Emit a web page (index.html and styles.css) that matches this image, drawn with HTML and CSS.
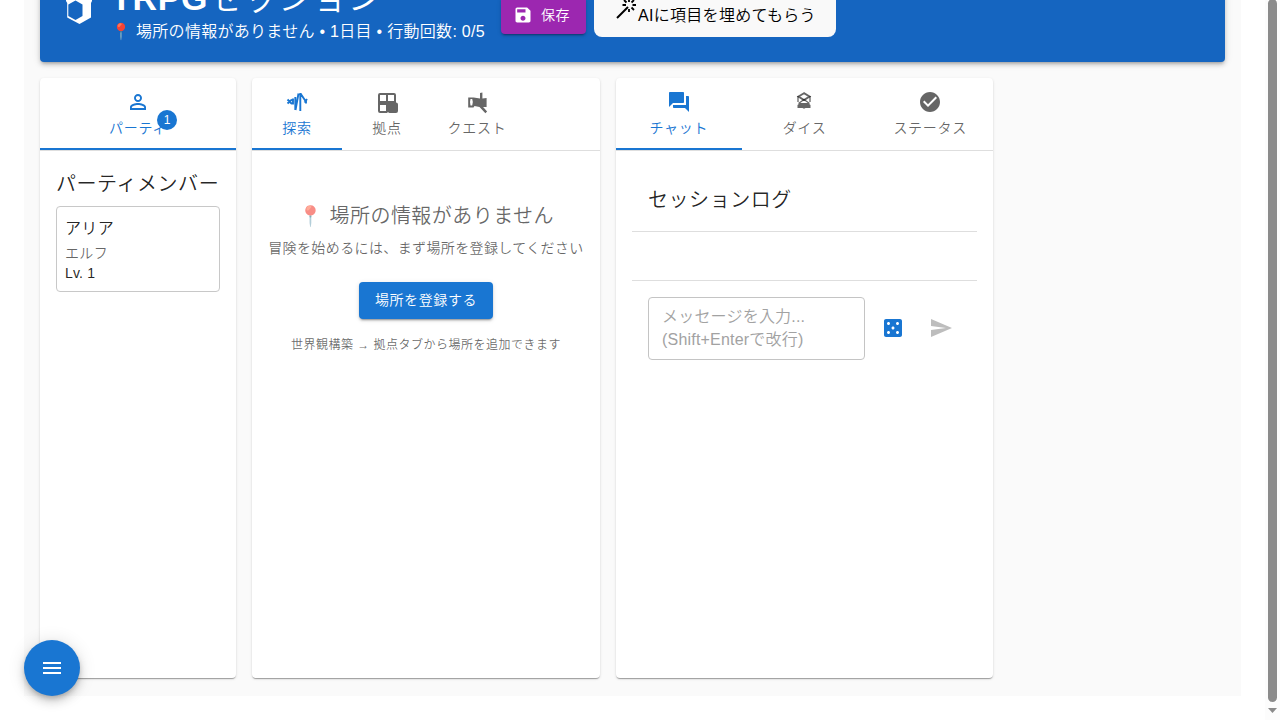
FILE: index.html
```html
<!DOCTYPE html>
<html lang="ja">
<head>
<meta charset="utf-8">
<title>TRPGセッション</title>
<link rel="stylesheet" href="styles.css">
</head>
<body>
<div class="page">
  <main class="session">
    <header class="banner">
      <svg class="logo" viewBox="0 0 35 35"><path fill-rule="evenodd" d="M2 4 15 0l13 4v8l-1 2v14.500L15.500 35 3.200 28.500V14L2 12ZM11.500 11.500 4.300 15.500V27l7.200 4 7-4V15.500Z"/></svg>
      <div class="heading">
        <h1><b>TRPG</b>セッション</h1>
        <p>📍 場所の情報がありません • 1日目 • 行動回数: 0/5</p>
      </div>
      <button class="btn save"><svg viewBox="0 0 24 24"><path d="M17 3H5c-1.110 0-2 .9-2 2v14c0 1.100.89 2 2 2h14c1.100 0 2-.9 2-2V7l-4-4zm-5 16c-1.660 0-3-1.340-3-3s1.340-3 3-3 3 1.340 3 3-1.340 3-3 3zm3-10H5V5h10v4z"/></svg>保存</button>
      <button class="ai"><svg viewBox="0 0 24 24"><path d="M3 21 14 10" stroke="currentColor" stroke-width="2" fill="none"/><path d="M15 1v4M15 12v3M8.500 8H12M18.500 8H22M10 3l2.500 2.500M20 3l-2.500 2.500M17.500 10.500 20 13" stroke="currentColor" stroke-width="1.800" fill="none"/></svg>AIに項目を埋めてもらう</button>
    </header>
    <div class="columns">
      <section class="panel party">
        <nav class="tabs">
          <div class="tab active"><svg viewBox="0 0 24 24"><path d="M12 5.900c1.160 0 2.100.94 2.100 2.100s-.94 2.100-2.100 2.100S9.900 9.160 9.900 8s.94-2.100 2.100-2.100m0 9c2.970 0 6.100 1.460 6.100 2.100v1.100H5.900V17c0-.64 3.130-2.100 6.100-2.100M12 4C9.790 4 8 5.790 8 8s1.790 4 4 4 4-1.790 4-4-1.790-4-4-4zm0 9c-2.670 0-8 1.340-8 4v3h16v-3c0-2.660-5.330-4-8-4z"/></svg><span class="label">パーティ<b class="badge">1</b></span></div>
        </nav>
        <div class="party-body">
          <h2>パーティメンバー</h2>
          <div class="member"><p class="name">アリア</p><p class="race">エルフ</p><p class="level">Lv. 1</p></div>
        </div>
      </section>
      <section class="panel world">
        <nav class="tabs">
          <div class="tab active"><svg viewBox="0 0 24 24"><path d="m2.500 9.500 4.500 4.500M2.500 13.500l4.500-4M8 8.500v6M10.300 7v13M10.500 20 13.500 3.500M15.300 3v18M15.500 3.500l5 7.500M19.500 12.500 22 9M21 9.500v4" fill="none" stroke="currentColor" stroke-width="1.900"/></svg><span class="label">探索</span></div>
          <div class="tab"><svg viewBox="0 0 24 24"><path fill-rule="evenodd" d="M5 3h14a2 2 0 0 1 2 2v7.500a2 2 0 0 1 2 2V21a2 2 0 0 1-2 2h-6a2 2 0 0 1-2-1l-1 1H5a2 2 0 0 1-2-2V5a2 2 0 0 1 2-2ZM5 5v6h6V5ZM13 5v6h6V5ZM5 15v6h6v-6Z"/></svg><span class="label">拠点</span></div>
          <div class="tab"><svg viewBox="0 0 24 24"><path fill-rule="evenodd" d="M3.200 7.500h5.500L15 8.500V3l2.400-.500v6l4.200-.500v9h-3.500l4 4.500-1.700 1.700L14.500 17l-5-1-1 1.500H3.200ZM5.500 9q-1 3 0 6.500h1.700q1.300-3.500 0-6.500Z"/></svg><span class="label">クエスト</span></div>
        </nav>
        <div class="empty">
          <h2>📍 場所の情報がありません</h2>
          <p class="hint">冒険を始めるには、まず場所を登録してください</p>
          <button class="btn register">場所を登録する</button>
          <p class="note">世界観構築 → 拠点タブから場所を追加できます</p>
        </div>
      </section>
      <section class="panel chat">
        <nav class="tabs">
          <div class="tab active"><svg viewBox="0 0 24 24"><path d="M21 6h-2v9H6v2c0 .55.45 1 1 1h11l4 4V7c0-.55-.45-1-1-1zm-4 6V3c0-.55-.45-1-1-1H3c-.55 0-1 .45-1 1v14l4-4h10c.55 0 1-.45 1-1z"/></svg><span class="label">チャット</span></div>
          <div class="tab"><svg class="shift" viewBox="0 0 24 24"><path d="M12 3.200 6.500 6.500 12 10l5.500-3.500Z" fill="none" stroke="currentColor" stroke-width="1.900"/><path d="M6 6v6M18 6v6M12 9.500 6.500 13.500M12 9.500l5.500 4" fill="none" stroke="currentColor" stroke-width="1.300"/><path d="m5.500 15 2.500-2h8l2.500 2v3h-5l-1.500.800-1.500-.800h-5Z"/></svg><span class="label">ダイス</span></div>
          <div class="tab"><svg viewBox="0 0 24 24"><path d="M12 2C6.480 2 2 6.480 2 12s4.480 10 10 10 10-4.480 10-10S17.520 2 12 2zm-2 15-5-5 1.410-1.410L10 14.170l7.590-7.590L19 8l-9 9z"/></svg><span class="label">ステータス</span></div>
        </nav>
        <div class="chat-body">
          <h2>セッションログ</h2>
          <div class="log"></div>
          <div class="composer">
            <textarea placeholder="メッセージを入力... (Shift+Enterで改行)" rows="2"></textarea>
            <button class="icon dice"><svg viewBox="0 0 24 24"><path d="M19 3H5c-1.100 0-2 .9-2 2v14c0 1.100.9 2 2 2h14c1.100 0 2-.9 2-2V5c0-1.100-.9-2-2-2zM7.500 18c-.83 0-1.500-.67-1.500-1.500S6.670 15 7.500 15s1.500.67 1.500 1.500S8.330 18 7.500 18zm0-9C6.670 9 6 8.330 6 7.500S6.670 6 7.500 6 9 6.670 9 7.500 8.330 9 7.500 9zm4.500 4.500c-.83 0-1.500-.67-1.500-1.500s.67-1.500 1.500-1.500 1.500.67 1.500 1.500-.67 1.500-1.500 1.500zm4.500 4.500c-.83 0-1.500-.67-1.500-1.500s.67-1.500 1.500-1.500 1.500.67 1.500 1.500-.67 1.500-1.500 1.500zm0-9c-.83 0-1.500-.67-1.500-1.500S15.670 6 16.500 6s1.500.67 1.500 1.500S17.330 9 16.500 9z"/></svg></button>
            <button class="icon send"><svg viewBox="0 0 24 24"><path d="M2.010 21 23 12 2.010 3 2 10l15 2-15 2z"/></svg></button>
          </div>
        </div>
      </section>
    </div>
  </main>
  <button class="menu"><svg viewBox="0 0 24 24"><path d="M3 18h18v-2H3v2zm0-5h18v-2H3v2zm0-7v2h18V6H3z"/></svg></button>
  <div class="scrollbar"><div class="thumb"></div><div class="arrow"></div></div>
</div>
</body>
</html>
```
FILE: styles.css
```css
* { box-sizing: border-box; }
body { margin: 0; font-family: "Liberation Sans", "Noto Sans CJK JP", sans-serif; color: rgba(0,0,0,.87); }
h1, h2, p { margin: 0; font-weight: 350; }
button { font: inherit; border: 0; margin: 0; }
svg { fill: currentColor; width: 24px; height: 24px; flex: none; }
.page { height: 720px; overflow: hidden; position: relative; background: #fff; padding-left: 24px; font-weight: 350; }
.session { width: 1217px; height: 696px; background: #fafafa; padding: 0 16px; overflow: hidden; }
.banner { height: 122px; margin: -60px 0 16px; padding: 0 24px 18px; background: #1565c0; color: #fff; border-radius: 4px; display: flex; align-items: flex-end; box-shadow: 0 3px 3px -2px rgba(0,0,0,.2), 0 3px 4px rgba(0,0,0,.14), 0 1px 8px rgba(0,0,0,.12); }
.logo { width: 35px; height: 35px; margin: 0 12px 20px 0; }
.heading { width: 374px; margin-right: 16px; white-space: nowrap; }
h1 { font-size: 34px; font-weight: 350; line-height: 42px; letter-spacing: .8px; padding-bottom: 1px; }
h1 b { font-weight: 700; letter-spacing: .7px; }
.heading p { font-size: 16px; line-height: 24px; letter-spacing: .29px; }
.btn { display: flex; align-items: center; justify-content: center; height: 37px; padding: 5px 16px 7px; border-radius: 4px; color: #fff; font-size: 14px; line-height: 24px; letter-spacing: .6px; white-space: nowrap; box-shadow: 0 3px 1px -2px rgba(0,0,0,.2), 0 2px 2px rgba(0,0,0,.14), 0 1px 5px rgba(0,0,0,.12); }
.save { width: 85px; background: #9c27b0; margin: 0 8px 10px 0; padding: 5px 16px 7px 12px; }
.save svg { width: 20px; height: 20px; margin-right: 8px; }
.ai { width: 242px; height: 50px; margin-bottom: 7px; padding: 3px 20px 0; border-radius: 8px; background: #f9f9f9; color: #000; font-size: 16px; letter-spacing: .3px; display: flex; align-items: center; white-space: nowrap; }
.ai svg { margin-bottom: 10px; }
.columns { display: flex; gap: 16px; }
.panel { height: 600px; background: #fff; border-radius: 4px; box-shadow: 0 2px 1px -1px rgba(0,0,0,.2), 0 1px 1px rgba(0,0,0,.14), 0 1px 3px rgba(0,0,0,.12); }
.party { width: 196px; }
.world { width: 348px; }
.chat { width: 377px; }
.tabs { height: 73px; border-bottom: 1px solid #dedede; display: flex; }
.tab { flex: 1; height: 72px; padding-top: 12px; display: flex; flex-direction: column; align-items: center; color: rgba(0,0,0,.6); font-size: 14px; line-height: 17.5px; letter-spacing: .7px; white-space: nowrap; }
.tab svg { margin-bottom: 6px; }
.tab .shift { margin-right: 1px; }
.world .tab { flex: none; width: 90px; }
.tab.active { color: #1976d2; border-bottom: 2px solid #1976d2; }
.label { position: relative; }
.badge { position: absolute; right: -10px; top: -10px; width: 20px; height: 20px; border-radius: 50%; background: #1976d2; color: #fff; font-size: 12px; font-weight: 500; line-height: 20px; text-align: center; letter-spacing: 0; }
h2 { height: 32px; padding-top: 1px; font-size: 20px; line-height: 32px; letter-spacing: .55px; white-space: nowrap; }
.party-body { padding: 16px; }
.member { margin-top: 7px; height: 86px; border: 1px solid #c8c8c8; border-radius: 4px; padding: 8px; letter-spacing: .35px; }
.name { font-size: 16px; line-height: 28px; }
.race, .level { font-size: 14px; line-height: 20px; }
.race { color: rgba(0,0,0,.6); }
.level { letter-spacing: .15px; }
.empty { padding-top: 48px; display: flex; flex-direction: column; align-items: center; color: rgba(0,0,0,.6); white-space: nowrap; }
.empty h2 { letter-spacing: .45px; }
.hint { margin-top: 7px; font-size: 14px; line-height: 20px; letter-spacing: .38px; }
.register { width: 134px; margin: 24px 0 16px; background: #1976d2; }
.note { font-size: 12px; line-height: 20px; letter-spacing: .49px; }
.chat-body { padding: 16px; }
.chat-body h2 { padding: 17px 16px 0; height: 64px; }
.log { height: 50px; border-top: 1px solid #dedede; border-bottom: 1px solid #dedede; }
.composer { padding: 16px; display: flex; align-items: center; gap: 8px; }
textarea { width: 217px; height: 63px; margin: 0; padding: 7px 13px; resize: none; overflow: hidden; border: 1px solid #c4c4c4; border-radius: 4px; font: 350 16px/23px "Liberation Sans", "Noto Sans CJK JP", sans-serif; letter-spacing: .2px; }
textarea::placeholder { color: #a2a2a2; opacity: 1; }
.icon { width: 40px; height: 40px; margin-bottom: 2px; padding: 8px; background: none; color: #1976d2; }
.icon.send { color: #bdbdbd; }
.menu { position: absolute; left: 24px; top: 640px; width: 56px; height: 56px; padding: 16px; border-radius: 50%; background: #1976d2; color: #fff; box-shadow: 0 3px 5px -1px rgba(0,0,0,.2), 0 6px 10px rgba(0,0,0,.14), 0 1px 18px rgba(0,0,0,.12); }
.scrollbar { position: absolute; right: 0; top: 0; width: 15px; height: 720px; background: #fcfcfc; }
.thumb { width: 9px; height: 703px; margin: -1px 3px 6px; border-radius: 5px; background: #8b8b8b; }
.arrow { width: 9px; height: 5px; margin-left: 3px; background: #8b8b8b; clip-path: polygon(0 0, 100% 0, 50% 100%); }
```
